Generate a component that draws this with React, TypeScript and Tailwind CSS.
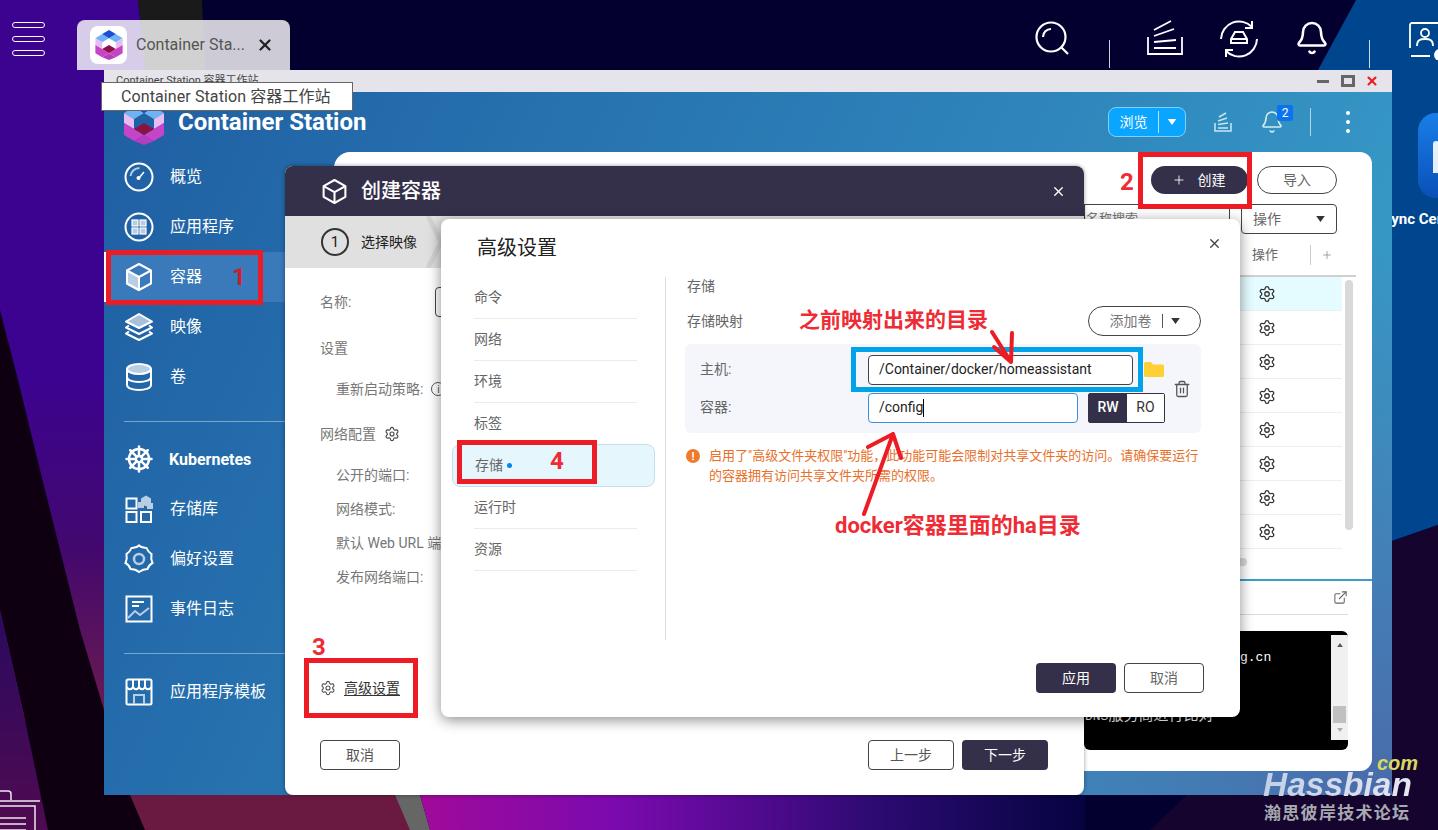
import { Bell, ExternalLink, Plus, Settings, ShipWheel, Trash2, X } from 'lucide-react';

const CUBE_PATH = 'M12 2.5 21 7.5V16.5L12 21.5 3 16.5V7.5Z';

function StationLogo({ className }: { className: string }) {
  return (
    <svg viewBox="0 -2 40 44" className={className}>
      <polygon points="0,10 10,4 20,10 10,16" fill="#6db3f5" />
      <polygon points="20,10 30,4 40,10 30,16" fill="#6db3f5" />
      <polygon points="10,4 20,-2 30,4 20,10" fill="#1a4fd6" />
      <polygon points="0,10 10,16 10,26 0,20" fill="#e6bdf2" />
      <polygon points="40,10 30,16 30,26 40,20" fill="#e6bdf2" />
      <polygon points="0,20 10,26 20,32 10,38 0,32" fill="#c644c8" />
      <polygon points="40,20 30,26 20,32 30,38 40,32" fill="#c644c8" />
      <polygon points="10,26 20,20 30,26 20,32" fill="#8c1244" />
      <polygon points="10,38 20,32 30,38 20,42" fill="#b73cc0" />
    </svg>
  );
}

function Caret({ className }: { className: string }) {
  return (
    <svg viewBox="0 0 10 7" className={className}>
      <path d="M0 0h10L5 7z" fill="currentColor" />
    </svg>
  );
}

function SideIcon({ name }: { name: string }) {
  const common = { fill: 'none', stroke: 'white', strokeWidth: 2 };
  return (
    <svg viewBox="0 0 30 30" className="w-[30px] h-[30px]">
      {name === 'overview' && (
        <g {...common}>
          <circle cx="15" cy="15" r="13.5" />
          <path d="M6.5 14a9 9 0 0 1 9-8" stroke="#b9cde4" />
          <path d="M15 16l5-6" strokeWidth="1.5" />
          <circle cx="14.5" cy="16" r="2" fill="white" stroke="none" />
        </g>
      )}
      {name === 'apps' && (
        <g {...common}>
          <circle cx="15" cy="15" r="13.5" />
          <g fill="#b9cde4" stroke="white" strokeWidth="1.2">
            <rect x="8" y="8" width="6" height="6" />
            <rect x="16" y="8" width="6" height="6" />
            <rect x="8" y="16" width="6" height="6" />
            <rect x="16" y="16" width="6" height="6" />
          </g>
        </g>
      )}
      {name === 'cube' && (
        <g {...common} strokeLinejoin="round">
          <path d="M15 2 27 8.5V21.5L15 28 3 21.5V8.5Z" />
          <path d="M3 8.5 15 15V28L3 21.5Z" fill="#b9cde4" />
          <path d="M15 15 27 8.5" />
        </g>
      )}
      {name === 'layers' && (
        <g {...common} strokeLinejoin="round">
          <path d="M15 2 28 9.5 15 16 2 9.5Z" fill="#a9c0da" />
          <path d="M5 13.5 2 15.5 15 22 28 15.5 25 13.5" />
          <path d="M5 19.5 2 21.5 15 28 28 21.5 25 19.5" />
        </g>
      )}
      {name === 'db' && (
        <g {...common}>
          <ellipse cx="15" cy="7" rx="12" ry="5" fill="#b9cde4" />
          <path d="M3 7v16c0 3 5.5 5 12 5s12-2 12-5V7" />
          <path d="M3 15c0 3 5.5 5 12 5s12-2 12-5" />
        </g>
      )}
      {name === 'repo' && (
        <g {...common}>
          <rect x="2.5" y="4.5" width="10" height="10" />
          <rect x="2.5" y="18" width="10" height="10" />
          <rect x="17" y="18" width="10" height="10" />
          <path d="M22 1.5l5 3v5l-5 3-5-3v-5z" fill="#b9cde4" stroke="none" />
          <rect x="14" y="8" width="6" height="6" fill="#b9cde4" stroke="none" />
          <rect x="23" y="9" width="6" height="6" fill="#b9cde4" stroke="none" />
        </g>
      )}
      {name === 'prefs' && (
        <g {...common}>
          <path d="M15 1.5c2.5 2.5 5 2 7.5 2.500 1 2.500 2 4 5 6-.5 3-.5 6 1 9-3 1.500-4 3-5 6-3 0-5 .5-8.500 3-3-2.500-5.500-3-8.500-3-1-3-2-4.500-5-6 1.500-3 1.500-6 1-9 3-2 4-3.500 5-6 2.500-.5 5 0 7.500-2.500z" />
          <circle cx="15" cy="15" r="5" stroke="#b9cde4" strokeWidth="2.5" />
        </g>
      )}
      {name === 'log' && (
        <g {...common}>
          <rect x="2.500" y="2.500" width="25" height="25" />
          <path d="M8 8h12M8 12h7" />
          <path d="M4 24l7-7 5 4 9-7" stroke="#b9cde4" />
        </g>
      )}
      {name === 'template' && (
        <g {...common}>
          <rect x="2.500" y="2.500" width="25" height="25" rx="1.500" />
          <path d="M2.500 10c2 3 5 3 6.500 0 1.500 3 4.500 3 6 0 1.500 3 4.500 3 6 0 1.500 3 4.500 3 6.500 0M9 2.500V10M15 2.500V10M21 2.500V10" />
          <path d="M10 27v-9h10v9" stroke="#b9cde4" />
        </g>
      )}
    </svg>
  );
}

const GROUP_1 = [
  { icon: 'overview', label: '概览' },
  { icon: 'apps', label: '应用程序' },
  { icon: 'cube', label: '容器', active: true },
  { icon: 'layers', label: '映像' },
  { icon: 'db', label: '卷' },
];

const GROUP_2 = [
  { icon: 'repo', label: '存储库' },
  { icon: 'prefs', label: '偏好设置' },
  { icon: 'log', label: '事件日志' },
];

function SideItem({ icon, label, active }: { icon: string; label: string; active?: boolean }) {
  return (
    <div className={`h-[50px] flex items-center pl-5 ${active ? 'bg-[#3a79ba] border-l-2 border-white' : ''}`}>
      <div className={active ? '-ml-0.5' : ''}>
        <SideIcon name={icon} />
      </div>
      <span className="ml-4 text-[16px] leading-[20px] text-white">{label}</span>
    </div>
  );
}

function Sidebar() {
  return (
    <div className="w-[230px] shrink-0">
      {GROUP_1.map((item) => (
        <SideItem key={item.label} {...item} />
      ))}
      <div className="mt-[19px] mx-5 h-px bg-white/40" />
      <div className="mt-[12px] h-[50px] flex items-center pl-5">
        <ShipWheel className="w-[30px] h-[30px] text-white" strokeWidth={2} />
        <span className="ml-[15px] mt-[1px] text-[16px] font-bold text-white">Kubernetes</span>
      </div>
      {GROUP_2.map((item) => (
        <SideItem key={item.label} {...item} />
      ))}
      <div className="mt-[19px] mx-5 h-px bg-white/40" />
      <div className="mt-[13px]">
        <SideItem icon="template" label="应用程序模板" />
      </div>
    </div>
  );
}

function MainPanel() {
  const rows = [0, 1, 2, 3, 4, 5, 6, 7];
  return (
    <div className="flex-1 bg-white rounded-tl-[16px] rounded-tr-[12px] rounded-br-[12px] overflow-hidden mr-5 mb-6">
      <div className="ml-auto w-[288px]">
        <div className="mt-[14px] pr-[35px] flex justify-end gap-[9px]">
          <div className="w-[97px] h-[28px] rounded-full bg-[#35304a] text-white text-[14px] flex items-center justify-center gap-[12px] pr-[2px]">
            <Plus className="w-[14px] h-[14px]" strokeWidth={1.5} />
            创建
          </div>
          <div className="w-[80px] h-[28px] rounded-full border border-[#444] text-[#666] text-[14px] flex items-center justify-center">
            导入
          </div>
        </div>
        <div className="mt-[10px] pr-[35px] flex gap-[11px]">
          <div className="w-[146px] h-[30px] border border-[#444] text-[13px] text-[#777] flex items-center pl-px">名称搜索</div>
          <div className="w-[96px] h-[30px] border border-[#444] rounded-[4px] text-[14px] text-[#666] flex items-center justify-between px-[11px]">
            操作
            <Caret className="w-[9px] h-[6px] text-[#333]" />
          </div>
        </div>
        <div className="h-[43px] mr-4 border-b-2 border-[#cfcfd4] flex items-center pl-[168px] text-[13px] text-[#666]">
          <span>操作</span>
          <span className="ml-[32px] h-5 w-px bg-[#ccc]" />
          <Plus className="ml-[10px] w-[12px] h-[12px] text-[#888]" strokeWidth={1.5} />
        </div>
        <div className="flex">
          <div className="w-[258px]">
            {rows.map((r) => (
              <div key={r} className={`h-[34px] border-b border-[#eee] flex items-center pl-[174px] ${r === 0 ? 'bg-[#e4fcff]' : ''}`}>
                <Settings className="w-[18px] h-[18px] text-[#333]" strokeWidth={1.7} />
              </div>
            ))}
          </div>
          <div className="ml-[3px] mt-[3px] w-2 h-[250px] rounded-full bg-[#d9d9d9]" />
        </div>
        <div className="mt-[9px] w-[163px] h-2 rounded-full bg-[#d9d9d9]" />
        <div className="mt-[13px] h-[2px] bg-[#3a9dcc]" />
        <div className="h-[34px] mr-6 border-b border-[#d5dde3] flex items-center justify-end">
          <ExternalLink className="w-[15px] h-[15px] text-[#666]" strokeWidth={1.7} />
        </div>
        <div className="mt-[16px] mr-6 h-[119px] bg-black rounded-[6px] flex overflow-hidden">
          <div className="flex-1 font-['Liberation_Mono','Noto_Sans_CJK_SC',monospace] text-[13px] leading-[20px] text-white whitespace-nowrap">
            <div className="mt-[17px] pl-[156px]">g.cn</div>
            <div className="mt-[39px] pl-px">
              DNS<span className="text-[15px]">服务商进行比对</span>
            </div>
          </div>
          <div className="w-[17px] mt-1 mb-[10px] bg-[#f0f0f0] flex flex-col items-center">
            <Caret className="mt-2 w-[8px] h-[4px] text-[#555] rotate-180" />
            <div className="mt-[59px] w-[13px] h-[17px] bg-[#c0c0c0]" />
            <Caret className="mt-[5px] w-[8px] h-[4px] text-[#aaa]" />
          </div>
        </div>
      </div>
    </div>
  );
}

function LabelRow({ text, className, children }: { text: string; className: string; children?: React.ReactNode }) {
  return (
    <div className={`h-5 flex items-center text-[14px] text-[#777] whitespace-nowrap ${className}`}>
      <span>{text}</span>
      {children}
    </div>
  );
}

function CreateDialog() {
  return (
    <div className="absolute left-[285px] top-[166px] w-[799px] h-[629px] bg-white rounded-[8px] overflow-hidden flex flex-col shadow-[0_0_4px_rgba(0,0,0,0.4)]">
      <div className="h-[50px] shrink-0 bg-[#35304a] flex items-center pl-[35px] pr-[18px] text-white">
        <svg viewBox="0 0 24 24" className="w-[29px] h-[29px]" fill="none" stroke="white" strokeWidth="1.7" strokeLinejoin="round">
          <path d={CUBE_PATH} />
          <path d="M3 7.500 12 12.500 21 7.500M12 12.500V21.500" />
        </svg>
        <span className="ml-[12px] text-[20px] font-medium">创建容器</span>
        <X className="ml-auto w-[15px] h-[15px]" strokeWidth={2.2} />
      </div>
      <div className="relative h-[52px] shrink-0 bg-[#e0e0e0] flex items-center pl-[36px] text-[14px] text-[#222]">
        <div className="w-[28px] h-[28px] rounded-full border-2 border-[#333] flex items-center justify-center text-[15px]">1</div>
        <span className="ml-[12px]">选择映像</span>
        <svg viewBox="0 0 20 52" className="absolute left-[140px] top-0 w-[20px] h-[52px]" fill="none" stroke="#d2d2d2" strokeWidth="5">
          <path d="M3 0 16 26 3 52" />
        </svg>
      </div>
      <div className="pl-[35px]">
        <LabelRow text="名称:" className="mt-[24px]">
          <div className="ml-[84px] w-[60px] h-[30px] shrink-0 border border-[#444] rounded-[4px]" />
        </LabelRow>
        <LabelRow text="设置" className="mt-[26px] text-[#666]" />
        <LabelRow text="重新启动策略:" className="mt-[21px] pl-[16px]">
          <span className="ml-[8px] w-[14px] h-[14px] shrink-0 rounded-full border border-[#555] text-[10px] text-[#555] flex items-center justify-center">i</span>
        </LabelRow>
        <LabelRow text="网络配置" className="mt-[25px] text-[#666]">
          <Settings className="ml-[8px] w-[16px] h-[16px] text-[#444]" strokeWidth={1.7} />
        </LabelRow>
        <LabelRow text="公开的端口:" className="mt-[21px] pl-[16px]" />
        <LabelRow text="网络模式:" className="mt-[14px] pl-[16px]" />
        <LabelRow text="默认 Web URL 端口:" className="mt-[14px] pl-[16px]" />
        <LabelRow text="发布网络端口:" className="mt-[14px] pl-[16px]" />
        <div className="mt-[91px] h-5 flex items-center text-[14px] text-[#333]">
          <Settings className="w-[16px] h-[16px] text-[#555]" strokeWidth={1.7} />
          <span className="ml-[8px] underline underline-offset-2">高级设置</span>
        </div>
      </div>
      <div className="mt-[42px] pl-[35px] pr-[36px] flex text-[14px]">
        <div className="w-[80px] h-[30px] border border-[#444] rounded-[4px] text-[#555] flex items-center justify-center">取消</div>
        <div className="ml-auto w-[86px] h-[30px] border border-[#444] rounded-[4px] text-[#555] flex items-center justify-center">上一步</div>
        <div className="ml-2 w-[86px] h-[30px] bg-[#35304a] rounded-[4px] text-white flex items-center justify-center">下一步</div>
      </div>
    </div>
  );
}

const NAV = ['命令', '网络', '环境', '标签', '存储', '运行时', '资源'];

function AdvancedDialog() {
  return (
    <div className="absolute left-[441px] top-[219px] w-[799px] h-[498px] bg-white rounded-[8px] flex flex-col shadow-[0_3px_14px_rgba(0,0,0,0.45)]">
      <div className="h-[58px] shrink-0 flex items-center pl-[36px] pr-[18px]">
        <span className="text-[20px] text-[#222]">高级设置</span>
        <X className="ml-auto -mt-[10px] w-[15px] h-[15px] text-[#444]" strokeWidth={2.2} />
      </div>
      <div className="flex">
        <div className="ml-[11px] w-[203px] text-[14px] text-[#666]">
          {NAV.map((item) =>
            item === '存储' ? (
              <div key={item} className="relative -mt-px h-[43px] rounded-[8px] border border-[#c8dfea] bg-[#e6f6fd] flex items-center pl-[22px]">
                <span className="absolute left-[4px] top-[9px] w-[2px] h-[24px] bg-[#1677e8]" />
                {item}
                <span className="ml-[4px] w-[5px] h-[5px] rounded-full bg-[#0a84e8]" />
              </div>
            ) : (
              <div key={item} className="ml-[22px] w-[163px] h-[42px] border-b border-[#e4edf3] flex items-center">
                {item}
              </div>
            ),
          )}
        </div>
        <div className="ml-[10px] w-[536px] h-[363px] border-l border-[#d8dee6] pl-[21px] text-[14px] text-[#666]">
          <div className="h-[18px] flex items-center">存储</div>
          <div className="mt-[11px] h-[30px] flex items-center justify-between">
            <span>存储映射</span>
            <div className="w-[113px] h-[30px] rounded-full border border-[#444] flex items-center justify-center text-[14px] text-[#777]">
              添加卷
              <span className="ml-[10px] h-[14px] w-px bg-[#555]" />
              <Caret className="ml-[8px] w-[9px] h-[6px] text-[#333]" />
            </div>
          </div>
          <div className="mt-[8px] -ml-[2px] h-[89px] rounded-[6px] bg-[#f4f6fb] flex items-center pl-[15px] text-[14px]">
            <div className="w-[465px] flex flex-col gap-[8px]">
              <div className="h-[30px] flex items-center">
                <span className="w-[168px]">主机:</span>
                <div className="w-[265px] h-[30px] bg-white border border-[#444] rounded-[4px] flex items-center pl-[10px] text-[14px] text-[#222]">
                  /Container/docker/homeassistant
                </div>
                <svg viewBox="0 0 20 15" className="ml-[11px] w-[20px] h-[15px]">
                  <path d="M0 1.500A1.500 1.500 0 0 1 1.500 0H7l2 2.500h9.500A1.500 1.500 0 0 1 20 4v9.500a1.500 1.500 0 0 1-1.500 1.500h-17A1.500 1.500 0 0 1 0 13.500z" fill="#ffd033" />
                </svg>
              </div>
              <div className="h-[30px] flex items-center">
                <span className="w-[168px]">容器:</span>
                <div className="w-[210px] h-[30px] bg-white border border-[#3a8fe0] rounded-[4px] flex items-center pl-[10px] text-[14px] text-[#222]">
                  /config
                  <span className="w-px h-[18px] bg-black" />
                </div>
                <div className="ml-[10px] w-[77px] h-[30px] flex rounded-[2px] border border-[#35304a] text-[14px]">
                  <span className="w-[38px] bg-[#35304a] text-white font-medium flex items-center justify-center">RW</span>
                  <span className="flex-1 bg-white text-[#333] flex items-center justify-center">RO</span>
                </div>
              </div>
            </div>
            <Trash2 className="ml-[8px] w-[18px] h-[18px] text-[#555]" strokeWidth={1.7} />
          </div>
          <div className="mt-[13px] -ml-[1px] flex items-start text-[13px] leading-[20px] text-[#e8702a]">
            <svg viewBox="0 0 14 14" className="mt-[3px] w-[14px] h-[14px] shrink-0">
              <circle cx="7" cy="7" r="7" fill="#ee7b2e" />
              <rect x="6.200" y="3" width="1.600" height="5.500" fill="white" />
              <rect x="6.200" y="9.500" width="1.600" height="1.600" fill="white" />
            </svg>
            <p className="ml-[9px] w-[492px] whitespace-nowrap">
              启用了"高级文件夹权限"功能，此功能可能会限制对共享文件夹的访问。请确保要运行
              <br />
              的容器拥有访问共享文件夹所需的权限。
            </p>
          </div>
        </div>
      </div>
      <div className="mt-auto mb-[24px] pr-[36px] flex justify-end gap-2 text-[14px]">
        <div className="w-[80px] h-[30px] bg-[#35304a] rounded-[4px] text-white flex items-center justify-center">应用</div>
        <div className="w-[80px] h-[30px] border border-[#444] rounded-[4px] text-[#666] flex items-center justify-center">取消</div>
      </div>
    </div>
  );
}

function AppWindow() {
  return (
    <div className="absolute left-[104px] top-[70px] w-[1288px] h-[725px] flex flex-col">
      <div className="h-[22px] shrink-0 bg-[#e4e4ea] flex items-center pl-3 pr-[13px] text-[11px] text-[#444]">
        <span>Container Station 容器工作站</span>
        <span className="ml-auto w-3 h-[3px] bg-[#666]" />
        <span className="ml-3 w-[14px] h-[12px] border-[3px] border-[#666]" />
        <X className="ml-[10px] w-[14px] h-[14px] text-[#ed1c24]" strokeWidth={3.5} />
      </div>
      <div className="flex-1 flex flex-col bg-[radial-gradient(circle_at_100%_100%,#4a6aaa_0%,transparent_38%),linear-gradient(115deg,#1f5fa3_0%,#2f86bc_60%,#3ba3cb_100%)]">
        <div className="h-[60px] shrink-0 flex items-center pl-5 pr-[42px]">
          <StationLogo className="w-[40px] h-[44px] mt-[1px]" />
          <span className="ml-[14px] text-[24px] font-bold text-white">Container Station</span>
          <div className="ml-auto w-[78px] h-[30px] rounded-[8px] bg-[#0aa5ff] border border-[#7fd0ff] flex items-center text-white text-[14px]">
            <span className="w-[49px] text-center">浏览</span>
            <span className="w-px h-[22px] bg-white/70" />
            <Caret className="ml-[8px] w-[10px] h-[6px]" />
          </div>
          <svg viewBox="0 0 22 22" className="ml-[26px] w-[22px] h-[22px]" fill="none" stroke="#c7e6f2" strokeWidth="1.500">
            <path d="M3 12v8h16v-8M6 17h10M6 13.500l10-1.500M6 10l9-3M7 6l7-4" />
          </svg>
          <div className="relative ml-[26px]">
            <Bell className="w-[24px] h-[24px] text-[#d5edf5]" strokeWidth={1.6} />
            <span className="absolute -right-[9px] -top-[5px] w-4 h-[16px] rounded-[2px] bg-[#0a74f0] text-white text-[12px] flex items-center justify-center">2</span>
          </div>
          <span className="ml-[26px] w-px h-[28px] bg-white/60" />
          <div className="ml-[35px] flex flex-col gap-[5px]">
            <span className="w-[4px] h-[4px] rounded-full bg-white" />
            <span className="w-[4px] h-[4px] rounded-full bg-white" />
            <span className="w-[4px] h-[4px] rounded-full bg-white" />
          </div>
        </div>
        <div className="flex-1 flex min-h-0">
          <Sidebar />
          <MainPanel />
        </div>
      </div>
    </div>
  );
}

function Wallpaper() {
  return (
    <svg viewBox="0 0 1438 830" className="absolute inset-0 w-[1438px] h-[830px]">
      <defs>
        <linearGradient id="stripe" x1="0" x2="1" y1="0" y2="0">
          <stop offset="0" stopColor="#a00a9a" />
          <stop offset="0.3" stopColor="#7a0aae" />
          <stop offset="0.7" stopColor="#2a0a70" />
          <stop offset="1" stopColor="#060440" />
        </linearGradient>
        <linearGradient id="side" gradientUnits="userSpaceOnUse" x1="0" x2="0" y1="380" y2="710">
          <stop offset="0" stopColor="#3c0390" />
          <stop offset="0.5" stopColor="#42086f" />
          <stop offset="1" stopColor="#6a1a50" />
        </linearGradient>
        <linearGradient id="corner" gradientUnits="userSpaceOnUse" x1="0" x2="0" y1="610" y2="830">
          <stop offset="0" stopColor="#2a0a60" />
          <stop offset="1" stopColor="#4f0a50" />
        </linearGradient>
      </defs>
      <rect width="1438" height="830" fill="#030030" />
      <polygon points="1356,0 1438,0 1438,525 1392,541 1300,600 1300,70 1318,70" fill="#00468f" />
      <polygon points="1392,541 1438,525 1438,830 1150,830 1392,600" fill="#14042e" />
      <polygon points="0,0 138,0 146,70 104,720 0,720" fill="url(#side)" />
      <polygon points="138,0 202,0 205,70 146,70" fill="#1a1a1a" />
      <polygon points="0,310 18,380 40,470 60,550 80,630 104,710 104,795 130,795 145,830 48,830 25,720 0,610" fill="#0e0010" />
      <polygon points="0,610 25,720 48,830 0,830" fill="url(#corner)" />
      <polygon points="130,795 395,795 425,830 145,830" fill="#6a1a40" />
      <polygon points="395,795 420,795 430,830 410,830" fill="#666" />
      <polygon points="420,795 1085,795 1085,830 430,830" fill="url(#stripe)" />
    </svg>
  );
}

function TopBar() {
  return (
    <div className="absolute left-0 top-0 w-[1438px] h-[70px] flex items-end">
      <div className="ml-[12px] mb-[14px] flex flex-col gap-[8px]">
        <span className="w-[33px] h-[6px] rounded-full border-[1.500px] border-white" />
        <span className="w-[33px] h-[6px] rounded-full border-[1.500px] border-white" />
        <span className="w-[33px] h-[6px] rounded-full border-[1.500px] border-white" />
      </div>
      <div className="ml-[32px] w-[213px] h-[50px] rounded-t-[8px] bg-white/80 flex items-center pl-[13px] pr-[16px]">
        <div className="w-[37px] h-[38px] rounded-[8px] bg-white flex items-center justify-center">
          <StationLogo className="w-[28px] h-[30px]" />
        </div>
        <span className="ml-[9px] text-[16px] text-[#555]">Container Sta...</span>
        <X className="ml-auto w-[18px] h-[18px] text-[#222]" strokeWidth={3} />
      </div>
      <div className="absolute left-[1034px] top-[20px] flex items-start text-white">
        <svg viewBox="0 0 36 36" className="w-[36px] h-[36px]" fill="none" stroke="white" strokeWidth="2.200">
          <circle cx="17" cy="17" r="14.500" />
          <path d="M9 17a8 8 0 0 1 8-8M27 27l7 7" />
        </svg>
        <span className="ml-[39px] mt-[20px] w-px h-[28px] bg-white/80" />
        <svg viewBox="0 0 38 36" className="ml-[36px] w-[38px] h-[36px]" fill="none" stroke="white" strokeWidth="1.800">
          <path d="M2 17v17h34V17M8 28h22M8 22l22-2M8 16l20-7M8 10l17-9" />
        </svg>
        <svg viewBox="0 0 40 40" className="ml-[35px] -mt-[1px] w-[40px] h-[40px]" fill="none" stroke="white" strokeWidth="2">
          <path d="M2 20A18 18 0 0 1 33 8M38 20A18 18 0 0 1 7 32M33 2v7h-7M7 38v-7h7" />
          <path d="M12 24v-4l4-7h8l4 7v4zM12 20h16" />
        </svg>
        <Bell className="ml-[35px] w-[36px] h-[36px]" strokeWidth={1.7} />
        <span className="ml-[39px] mt-[20px] w-px h-[28px] bg-white/80" />
        <svg viewBox="0 0 36 40" className="ml-[38px] w-[36px] h-[40px] shrink-0" fill="none" stroke="white" strokeWidth="1.800">
          <path d="M36 3H4a2 2 0 0 0-2 2v23" />
          <circle cx="17" cy="13" r="4" />
          <path d="M9 26c0-6 3-7 8-7s8 1 8 7M3 36h19" />
          <circle cx="32" cy="35" r="6" fill="white" stroke="none" />
        </svg>
      </div>
    </div>
  );
}

function DesktopIcons() {
  return (
    <>
      <div className="absolute left-[1418px] top-[113px] w-[50px] h-[85px] rounded-[18px] bg-[linear-gradient(180deg,#1a7ee8,#0a4fb8)] overflow-hidden">
        <span className="absolute left-[15px] top-[28px] w-[6px] h-[32px] rounded-t-full bg-white/90" />
      </div>
      <div className="absolute left-[1382px] top-[208px] text-[15px] font-bold text-white whitespace-nowrap">Sync Center</div>
      <svg viewBox="0 0 40 40" className="absolute left-0 top-[790px] w-[40px] h-[40px]" fill="none" stroke="white" strokeWidth="1.500" opacity="0.9">
        <path d="M0 1h8a3 3 0 0 1 3 3v6M-2 11h42M0 16h35v24M0 28h26M0 34h26M0 40h26" />
      </svg>
    </>
  );
}

function Watermark() {
  return (
    <>
      <div className="absolute left-[1377px] top-[755px] text-[20px] leading-[17px] font-bold italic text-[#d8d860] font-['Liberation_Sans',sans-serif]">com</div>
      <div className="absolute left-[1263px] top-[772px] text-[33.500px] leading-[26px] font-bold italic text-transparent bg-clip-text bg-[linear-gradient(90deg,#c3cfe6,#e6e6f0)] font-['Liberation_Sans',sans-serif]">Hassbian</div>
      <div className="absolute left-[1264px] top-[803px] text-[17px] leading-[20px] font-bold text-[#a8a8b0] tracking-[1.300px] whitespace-nowrap">瀚思彼岸技术论坛</div>
    </>
  );
}

function Annotations() {
  return (
    <>
      <div className="absolute left-[106px] top-[250px] w-[157px] h-[55px] border-[5px] border-[#ed1c24]" />
      <div className="absolute left-[232px] top-[263px] text-[24px] leading-[28px] font-bold text-[#c8202e]">1</div>
      <div className="absolute left-[1138px] top-[152px] w-[114px] h-[57px] border-[5px] border-[#ed1c24]" />
      <div className="absolute left-[1120px] top-[168px] text-[24px] leading-[28px] font-bold text-[#ed2c35]">2</div>
      <div className="absolute left-[304px] top-[658px] w-[114px] h-[60px] border-[5px] border-[#ed1c24]" />
      <div className="absolute left-[312px] top-[633px] text-[24px] leading-[28px] font-bold text-[#ed2c35]">3</div>
      <div className="absolute left-[457px] top-[440px] w-[140px] h-[44px] border-[5px] border-[#ed1c24]" />
      <div className="absolute left-[550px] top-[447px] text-[24px] leading-[28px] font-bold text-[#ed2c35]">4</div>
      <div className="absolute left-[851px] top-[347px] w-[292px] h-[45px] border-[5px] border-[#00a2e8]" />
      <div className="absolute left-[799px] top-[305px] text-[21px] leading-[30px] font-bold text-[#ed2c35] whitespace-nowrap">之前映射出来的目录</div>
      <div className="absolute left-[835px] top-[511px] text-[22px] leading-[30px] font-bold text-[#ed2c35] whitespace-nowrap">docker容器里面的ha目录</div>
      <svg viewBox="0 0 1438 830" className="absolute inset-0 w-[1438px] h-[830px] pointer-events-none" fill="none" stroke="#ed1c24" strokeWidth="4" strokeLinecap="round">
        <path d="M992 332 1011 362M1012 333 1011 362M994 347 1011 362" />
        <path d="M864 514 893 434M868 447 893 434M901 458 893 434" />
      </svg>
    </>
  );
}

export default function App() {
  return (
    <div className="relative w-[1438px] h-[830px] overflow-hidden font-[Roboto,'Noto_Sans_CJK_SC',sans-serif]">
      <Wallpaper />
      <DesktopIcons />
      <TopBar />
      <AppWindow />
      <div className="absolute left-[101px] top-[82px] w-[252px] h-[29px] bg-white border border-[#666] flex items-center pl-[19px] text-[16px] tracking-[0.1px] text-[#444]">
        Container Station 容器工作站
      </div>
      <CreateDialog />
      <AdvancedDialog />
      <Annotations />
      <Watermark />
    </div>
  );
}
